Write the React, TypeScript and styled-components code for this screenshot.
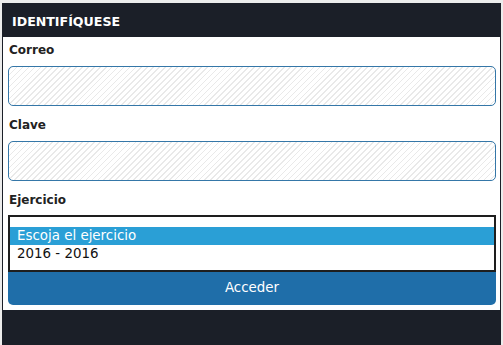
import styled, { createGlobalStyle } from "styled-components";

const GlobalStyle = createGlobalStyle`
  html, body {
    margin: 0;
    padding: 0;
    background: #ececec;
  }
  body {
    font-family: "DejaVu Sans", Verdana, sans-serif;
  }
`;

const Panel = styled.div`
  margin: 3px 2px 0 2px;
  background-color: #1b1f28;
  padding: 0 1px;
  height: 342px;
  box-sizing: border-box;
`;

const Header = styled.div`
  height: 34px;
  display: flex;
  align-items: center;
  padding-left: 9px;
  color: #ffffff;
  font-weight: bold;
  font-size: 12.6px;
  padding-top: 3px;
  box-sizing: border-box;
`;

const Body = styled.form`
  background-color: #ffffff;
  padding: 1px 4px 5px 5px;
  display: flex;
  flex-direction: column;
`;

const Field = styled.div`
  display: flex;
  flex-direction: column;
  margin-bottom: 7px;
`;

const Label = styled.label<{ $gap?: number }>`
  height: 24px;
  line-height: 24px;
  font-size: 12px;
  font-weight: bold;
  color: #222222;
  padding-left: 1px;
  margin-bottom: ${({ $gap }) => $gap ?? 4}px;
`;

const Input = styled.input`
  height: 40px;
  box-sizing: border-box;
  border: 1px solid #3577a8;
  border-radius: 5px;
  background: repeating-linear-gradient(
    -45deg,
    #ffffff 0px,
    #ffffff 3px,
    #e9e9e9 3px,
    #e9e9e9 4.2px
  );
  outline: none;
`;

const ListBox = styled.div`
  border: 2px solid #1e1e1e;
  padding: 10px 0 7px 0;
  background: #ffffff;
`;

const Option = styled.div<{ $selected?: boolean }>`
  height: 18px;
  line-height: 18px;
  font-size: 13.4px;
  padding-left: 7px;
  color: ${({ $selected }) => ($selected ? "#ffffff" : "#111111")};
  background-color: ${({ $selected }) => ($selected ? "#2a9fd6" : "transparent")};
`;

const Button = styled.button`
  height: 33px;
  border: none;
  border-radius: 0 0 5px 5px;
  background-color: #1f6ea9;
  color: #ffffff;
  font-family: "DejaVu Sans", Verdana, sans-serif;
  font-size: 13.4px;
  padding: 0 0 2px 0;
  cursor: pointer;
`;

const SelectField = styled.div`
  display: flex;
  flex-direction: column;
`;

export default function App() {
  return (
    <>
      <GlobalStyle />
      <Panel>
        <Header>IDENTIFÍQUESE</Header>
        <Body onSubmit={(e) => e.preventDefault()}>
          <Field>
            <Label>Correo</Label>
            <Input type="email" />
          </Field>
          <Field>
            <Label>Clave</Label>
            <Input type="password" />
          </Field>
          <SelectField>
            <Label $gap={3}>Ejercicio</Label>
            <ListBox role="listbox">
              <Option $selected>Escoja el ejercicio</Option>
              <Option>2016 - 2016</Option>
            </ListBox>
            <Button type="submit">Acceder</Button>
          </SelectField>
        </Body>
      </Panel>
    </>
  );
}
